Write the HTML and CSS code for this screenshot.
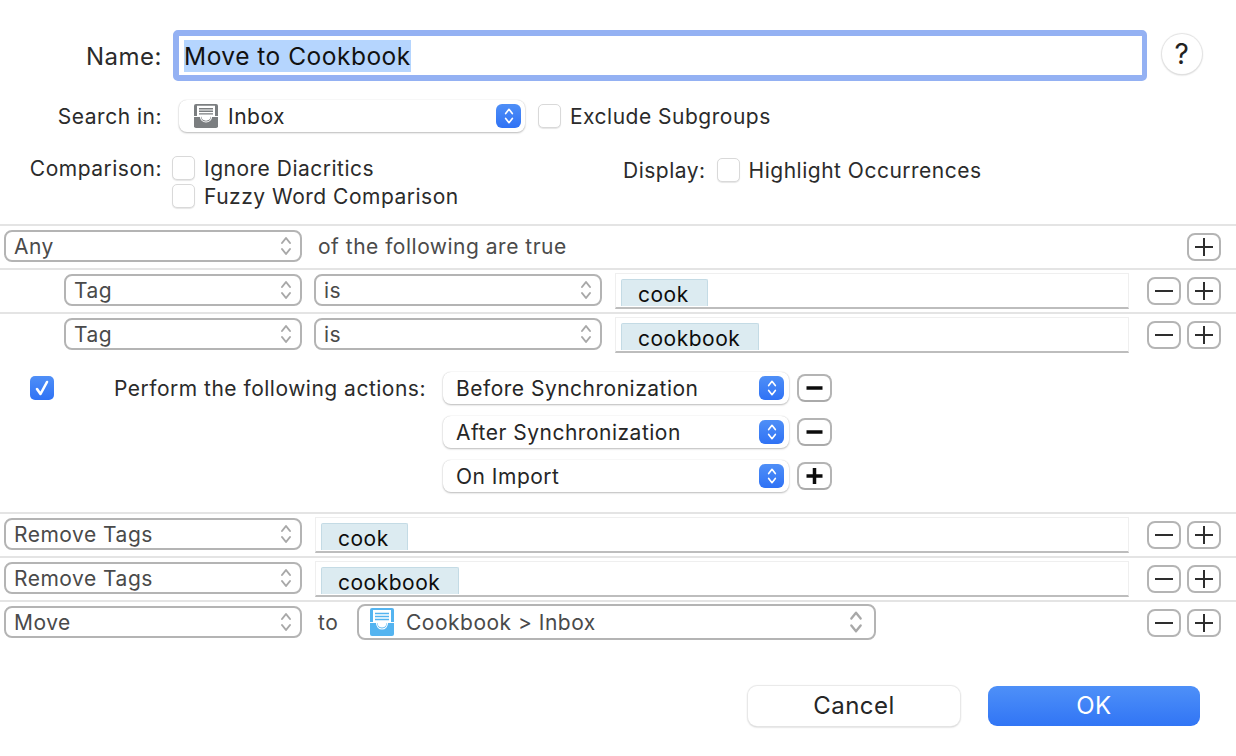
FILE: index.html
```html
<!DOCTYPE html>
<html lang="en">
<head>
<meta charset="utf-8">
<title>Smart Rule</title>
<link rel="stylesheet" href="styles.css">
</head>
<body>
<svg class="defs" width="0" height="0" aria-hidden="true">
  <symbol id="updown" viewBox="0 0 12 24">
    <path d="M2 9 L6 4 L10 9 M2 15 L6 20 L10 15" fill="none" stroke="currentColor" stroke-width="2" stroke-linecap="round" stroke-linejoin="round"/>
  </symbol>
  <symbol id="inbox" viewBox="0 0 24 28" preserveAspectRatio="none">
    <path d="M2 0H22a2 2 0 0 1 2 2V26a2 2 0 0 1-2 2H2a2 2 0 0 1-2-2V2a2 2 0 0 1 2-2Z" fill="currentColor"/>
    <path d="M3 2H21V15H16.500C16.500 18 14.500 19.500 12 19.500S7.500 18 7.500 15H3Z" fill="#fff"/>
    <path d="M5 5.500H19M5 8.500H19M5 11.500H19" stroke="currentColor" stroke-width="1.600"/>
    <path d="M0 14.500H6.500C6.500 18.500 9 21 12 21S17.500 18.500 17.500 14.500H24" fill="none" stroke="#fff" stroke-width="1.200"/>
  </symbol>
  <symbol id="minus" viewBox="0 0 34 28"><path d="M8 14H26" stroke="currentColor" stroke-width="2"/></symbol>
  <symbol id="plus" viewBox="0 0 34 28"><path d="M8 14H26M17 5V23" stroke="currentColor" stroke-width="2"/></symbol>
  <symbol id="minus-b" viewBox="0 0 35 28"><path d="M9.500 14H25.500" stroke="currentColor" stroke-width="3.500"/></symbol>
  <symbol id="plus-b" viewBox="0 0 35 28"><path d="M9.500 14H25.500M17.500 6V22" stroke="currentColor" stroke-width="3.500"/></symbol>
</svg>

<main class="dialog">
  <div class="name-row">
    <label class="label">Name:</label>
    <div class="name-field"><span class="selected">Move to Cookbook</span></div>
    <button class="help">?</button>
  </div>

  <div class="search-row">
    <span class="label">Search in:</span>
    <div class="pop pop-search">
      <svg class="icon icon-gray"><use href="#inbox"/></svg>
      <span class="pop-text">Inbox</span>
      <span class="stepper"><svg><use href="#updown"/></svg></span>
    </div>
    <span class="check"></span>
    <span class="check-text">Exclude Subgroups</span>
  </div>

  <div class="compare-row">
    <span class="label label-top">Comparison:</span>
    <div class="compare-checks">
      <div class="check-line"><span class="check"></span><span class="check-text">Ignore Diacritics</span></div>
      <div class="check-line"><span class="check"></span><span class="check-text">Fuzzy Word Comparison</span></div>
    </div>
    <div class="display-group">
      <span>Display:</span>
      <span class="check"></span>
      <span class="check-text">Highlight Occurrences</span>
    </div>
  </div>

  <section class="rule">
    <div class="sel sel-wide"><span>Any</span><svg class="chev"><use href="#updown"/></svg></div>
    <span class="muted of-text">of the following are true</span>
    <div class="btns"><button class="sq"><svg><use href="#plus"/></svg></button></div>
  </section>
  <section class="rule">
    <div class="sel sel-tag"><span>Tag</span><svg class="chev"><use href="#updown"/></svg></div>
    <div class="sel sel-is"><span>is</span><svg class="chev"><use href="#updown"/></svg></div>
    <div class="field field-crit"><span class="chip">cook</span></div>
    <div class="btns"><button class="sq"><svg><use href="#minus"/></svg></button><button class="sq"><svg><use href="#plus"/></svg></button></div>
  </section>
  <section class="rule">
    <div class="sel sel-tag"><span>Tag</span><svg class="chev"><use href="#updown"/></svg></div>
    <div class="sel sel-is"><span>is</span><svg class="chev"><use href="#updown"/></svg></div>
    <div class="field field-crit"><span class="chip">cookbook</span></div>
    <div class="btns"><button class="sq"><svg><use href="#minus"/></svg></button><button class="sq"><svg><use href="#plus"/></svg></button></div>
  </section>

  <section class="actions">
    <span class="check check-on">
      <svg viewBox="0 0 24 24"><path d="M7 13 L10.500 18 L17 6" fill="none" stroke="#fff" stroke-width="2.600" stroke-linecap="round" stroke-linejoin="round"/></svg>
    </span>
    <span class="act-label">Perform the following actions:</span>
    <div class="pop pop-act"><span class="pop-text">Before Synchronization</span><span class="stepper"><svg><use href="#updown"/></svg></span></div>
    <button class="sq sq-bold"><svg><use href="#minus-b"/></svg></button>
    <div class="pop pop-act"><span class="pop-text">After Synchronization</span><span class="stepper"><svg><use href="#updown"/></svg></span></div>
    <button class="sq sq-bold"><svg><use href="#minus-b"/></svg></button>
    <div class="pop pop-act"><span class="pop-text">On Import</span><span class="stepper"><svg><use href="#updown"/></svg></span></div>
    <button class="sq sq-bold"><svg><use href="#plus-b"/></svg></button>
  </section>

  <section class="rule">
    <div class="sel sel-wide"><span>Remove Tags</span><svg class="chev"><use href="#updown"/></svg></div>
    <div class="field field-act"><span class="chip">cook</span></div>
    <div class="btns"><button class="sq"><svg><use href="#minus"/></svg></button><button class="sq"><svg><use href="#plus"/></svg></button></div>
  </section>
  <section class="rule">
    <div class="sel sel-wide"><span>Remove Tags</span><svg class="chev"><use href="#updown"/></svg></div>
    <div class="field field-act"><span class="chip">cookbook</span></div>
    <div class="btns"><button class="sq"><svg><use href="#minus"/></svg></button><button class="sq"><svg><use href="#plus"/></svg></button></div>
  </section>
  <section class="rule">
    <div class="sel sel-wide"><span>Move</span><svg class="chev"><use href="#updown"/></svg></div>
    <span class="muted to-text">to</span>
    <div class="sel sel-dest">
      <svg class="icon icon-blue"><use href="#inbox"/></svg>
      <span>Cookbook &gt; Inbox</span>
      <svg class="chev chev-big"><use href="#updown"/></svg>
    </div>
    <div class="btns"><button class="sq"><svg><use href="#minus"/></svg></button><button class="sq"><svg><use href="#plus"/></svg></button></div>
  </section>

  <footer class="footer">
    <button class="cta cta-cancel">Cancel</button>
    <button class="cta cta-ok">OK</button>
  </footer>
</main>
</body>
</html>
```
FILE: styles.css
```css
* { box-sizing: border-box; }
html, body { margin: 0; padding: 0; background: #fff; }
body {
  width: 1236px;
  height: 756px;
  overflow: hidden;
  font-family: "Inter", "Liberation Sans", sans-serif;
  font-size: 21px;
  letter-spacing: 0.5px;
  color: #2b2b2b;
}
.defs { position: absolute; }
button { font-family: inherit; letter-spacing: inherit; padding: 0; margin: 0; }

.dialog { padding-top: 30px; }
.label { width: 162px; text-align: right; flex: none; }

.name-row { display: flex; align-items: center; height: 51px; }
.name-row .label { font-size: 24px; padding-top: 1px; }
.name-field {
  width: 974px;
  height: 51px;
  margin-left: 11px;
  background: #fff;
  border: 6px solid #94b1f3;
  border-right-width: 5px;
  border-radius: 5px;
  padding: 1px 0 0 5px;
  display: flex;
  align-items: center;
  font-size: 24.500px;
  color: #111;
}
.selected { background: #b5d5fe; height: 32px; line-height: 32px; }
.help {
  width: 40px;
  height: 40px;
  margin: 0 0 4px 15px;
  border-radius: 50%;
  border: 0;
  background: #fff;
  box-shadow: 0 0 1px 1px #e2e2e2, 0 1px 2px #c4c4c4;
  font-size: 28px;
  color: #222;
}

.search-row { display: flex; align-items: center; height: 32px; margin-top: 19px; }
.pop {
  display: flex;
  align-items: center;
  background: #fff;
  border-radius: 8px;
  box-shadow: 0 0 1px #c9c9c9, 0 1px 2px #b9b9b9;
  height: 32px;
}
.pop-search { width: 346px; margin-left: 17px; padding: 0 4px 0 15px; }
.pop-search .icon { margin-right: 10px; height: 24px; }
.pop-text { flex: 1; color: #262626; }
.stepper {
  width: 25px;
  height: 24px;
  border-radius: 6px;
  background: linear-gradient(#4f8ff7, #2f72f5);
  color: #fff;
  display: flex;
  align-items: center;
  justify-content: center;
  flex: none;
}
.stepper svg { width: 12px; height: 20px; }
.icon { width: 24px; height: 28px; flex: none; display: block; }
.icon-gray { color: #7b7e80; }
.icon-blue { color: #54b4f0; }

.check {
  width: 23px;
  height: 24px;
  border-radius: 5px;
  background: #fff;
  border: 1px solid #d9d9d9;
  box-shadow: 0 1px 1px #e6e6e6;
  flex: none;
  display: block;
}
.check-text { margin-left: 9px; }
.search-row .check { margin-left: 13px; }

.compare-row { display: flex; align-items: flex-start; margin-top: 24px; height: 53px; }
.label-top { line-height: 24px; padding-top: 1px; }
.compare-checks { width: 451px; margin-left: 10px; flex: none; display: flex; flex-direction: column; gap: 4px; }
.check-line { display: flex; align-items: center; height: 24px; }
.display-group { display: flex; align-items: center; margin-top: 2px; height: 24px; }
.display-group .check { margin-left: 11px; }

.rule {
  display: flex;
  align-items: center;
  height: 44px;
  padding: 0 15px 2px 4px;
  border-top: 2px solid #e4e4e4;
}
.compare-row + .rule { margin-top: 15px; }
.muted { color: #4b4b4b; }
.sel {
  display: flex;
  align-items: center;
  height: 32px;
  border: 2px solid #b4b4b4;
  border-radius: 8px;
  background: #fff;
  color: #4a4a4a;
  padding: 0 8px 0 8px;
  flex: none;
}
.sel > span { flex: 1; }
.chev { width: 12px; height: 24px; color: #a8a8a8; flex: none; display: block; }
.sel-wide { width: 298px; }
.sel-tag { width: 238px; margin-left: 60px; }
.sel-is { width: 288px; margin-left: 12px; }
.of-text { margin-left: 16px; flex: 1; }
.to-text { margin-left: 16px; width: 39px; }
.sel-dest { width: 519px; height: 36px; padding: 0 10px 0 11px; }
.sel-dest .icon { margin-right: 12px; }
.chev-big { width: 16px; height: 28px; }

.field {
  height: 36px;
  margin-top: 2px;
  border: 1px solid #efefef;
  border-bottom: 2px solid #bdbdbd;
  background: #fff;
  padding: 0 0 1px 5px;
  display: flex;
  align-items: flex-end;
  flex: none;
}
.field-crit { width: 514px; margin-left: 13px; }
.field-act { width: 814px; margin-left: 13px; }
.chip {
  display: block;
  height: 27px;
  line-height: 30px;
  padding: 0 18px 0 16px;
  background: #dcebf1;
  border: 1px solid #c4dbe5;
  border-bottom: 0;
  border-radius: 2px 2px 0 0;
  color: #0d0d0d;
}

.btns { display: flex; gap: 6px; margin-left: auto; margin-top: 2px; }
.sq {
  width: 34px;
  height: 28px;
  border: 2px solid #b4b4b4;
  border-radius: 8px;
  background: #fff;
  color: #2e2e2e;
  display: block;
}
.sq svg { display: block; margin: -2px; width: 34px; height: 28px; }

.actions {
  display: grid;
  grid-template-columns: 54px 373px 362px 43px;
  grid-auto-rows: 32px;
  row-gap: 12px;
  align-items: center;
  padding: 16px 0 20px 0;
}
.check-on {
  margin-left: 30px;
  width: 24px;
  height: 24px;
  border: 0;
  box-shadow: none;
  background: linear-gradient(#4f8ff7, #2f72f5);
}
.check-on svg { width: 24px; height: 24px; display: block; }
.act-label { padding-left: 60px; white-space: nowrap; }
.pop-act { margin-left: 16px; width: 346px; padding: 0 5px 0 13px; grid-column: 3; }
.sq-bold {
  margin-left: 8px;
  width: 35px;
  border-bottom-color: #aaa;
  color: #0c0c0c;
  grid-column: 4;
}
.sq-bold svg { width: 35px; }

.footer { display: flex; justify-content: flex-end; gap: 28px; padding-right: 36px; }
.rule:last-of-type + .footer { margin-top: 42px; }
.cta {
  width: 212px;
  height: 40px;
  border: 0;
  border-radius: 9px;
  padding-bottom: 2px;
  font-size: 24px;
}
.cta-cancel {
  background: #fff;
  color: #262626;
  box-shadow: 0 0 1px 1px #e8e8e8, 0 1px 2px #b0b0b0;
}
.cta-ok { background: linear-gradient(#4e90f8, #3175f5); color: #fff; }
```
